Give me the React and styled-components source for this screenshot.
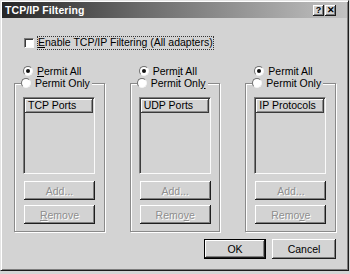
import React from "react";
import styled, { createGlobalStyle, css } from "styled-components";

const Global = createGlobalStyle`
  html, body { margin: 0; padding: 0; background: #d6d6d6; }
  body { font-family: "Liberation Sans", Arial, sans-serif; font-size: 10.5px; color: #000; }
  * { box-sizing: border-box; }
`;

const FACE = "#d3d3d3";

const Window = styled.div`
  width: 349px;
  height: 271px;
  background: ${FACE};
  border-top: 1px solid #e4e4e4;
  border-left: 1px solid #e4e4e4;
  border-right: 1px solid #1c1c1c;
  border-bottom: 1px solid #1c1c1c;
  box-shadow: inset 1px 1px #ffffff, inset -1px -1px #7c7c7c;
  padding: 1px;
  display: flex;
  flex-direction: column;
`;

const TitleBar = styled.div`
  height: 16px;
  background: linear-gradient(90deg, #262626 0%, #6a6a6a 40%, #c2c2c2 100%);
  display: flex;
  align-items: center;
  padding: 0 11px 0 3px;
`;

const Title = styled.div`
  flex: 1;
  color: #fff;
  font-weight: bold;
  font-size: 10.5px;
  letter-spacing: 0.1px;
`;

const CapBtn = styled.div`
  width: 11px;
  height: 11px;
  margin-left: ${(p) => p.$gap || 0}px;
  background: ${FACE};
  box-shadow: inset -1px -1px #1c1c1c, inset 1px 1px #fff, inset -2px -2px #7c7c7c;
  display: flex;
  align-items: center;
  justify-content: center;
  font-weight: bold;
  font-size: 9px;
  line-height: 1;
`;

const Content = styled.div`
  flex: 1;
  display: flex;
  flex-direction: column;
  padding: 0 11px 0 12px;
`;

const CheckRow = styled.div`
  margin-top: 18px;
  margin-left: 10px;
  height: 14px;
  display: flex;
  align-items: center;
`;

const CheckBox = styled.span`
  width: 10px;
  height: 10px;
  background: #fff;
  border: 1px solid;
  border-color: #7a7a7a #fafafa #fafafa #7a7a7a;
  box-shadow: inset 1px 1px #3a3a3a;
`;

const FocusLabel = styled.span`
  margin-left: 3px;
  padding: 0 1px 0 1px;
  height: 14px;
  line-height: 13px;
  outline: 1px dotted #333;
  outline-offset: -1px;
`;

const Columns = styled.div`
  display: flex;
  gap: 25px;
  margin-top: 15px;
`;

const Column = styled.div`
  width: 91px;
  display: flex;
  flex-direction: column;
`;

const RadioRow = styled.div`
  display: flex;
  align-items: center;
  height: 12px;
  margin-left: ${(p) => p.$indent || 0}px;
  white-space: nowrap;
`;

const Radio = styled.span`
  position: relative;
  flex: none;
  width: 10px;
  height: 10px;
  border-radius: 50%;
  background: #fff;
  border: 1px solid;
  border-color: #6e6e6e #f4f4f4 #f4f4f4 #6e6e6e;
  ${(p) =>
    p.$checked &&
    css`
      &::after {
        content: "";
        position: absolute;
        left: 2px;
        top: 2px;
        width: 4px;
        height: 4px;
        border-radius: 50%;
        background: #111;
      }
    `}
`;

const RadioText = styled.span`
  margin-left: 4px;
`;

const Group = styled.div`
  position: relative;
  margin-top: 6px;
  height: 149px;
  border: 1px solid #8a8a8a;
  box-shadow: inset 1px 1px #fff, 1px 1px #fff;
  padding: 13px 0 0 8px;
  display: flex;
  flex-direction: column;
`;

const Legend = styled.div`
  position: absolute;
  top: -7px;
  left: 6px;
  background: ${FACE};
  padding-right: 2px;
`;

const ListBox = styled.div`
  width: 72px;
  height: 77px;
  border: 1px solid;
  border-color: #7c7c7c #fafafa #fafafa #7c7c7c;
  box-shadow: inset 1px 1px #3a3a3a, inset -1px -1px ${FACE};
  padding: 1px;
  display: flex;
  flex-direction: column;
`;

const ListHeader = styled.div`
  height: 14px;
  box-shadow: inset -1px -1px #3a3a3a, inset 1px 1px #fff, inset -2px -2px #8a8a8a;
  padding-left: 3px;
  line-height: 13px;
  white-space: nowrap;
  overflow: hidden;
`;

const Button = styled.div`
  width: ${(p) => p.$w || 71}px;
  height: ${(p) => p.$h || 19}px;
  margin-top: ${(p) => p.$mt || 0}px;
  margin-left: ${(p) => p.$ml || 0}px;
  background: ${FACE};
  display: flex;
  align-items: center;
  justify-content: center;
  box-shadow: inset -1px -1px #1e1e1e, inset 1px 1px #fff, inset -2px -2px #808080;
  color: ${(p) => (p.$disabled ? "#8e8e8e" : "#000")};
  text-shadow: ${(p) => (p.$disabled ? "1px 1px #fff" : "none")};
  ${(p) =>
    p.$default &&
    css`
      border: 1px solid #000;
    `}
`;

const Footer = styled.div`
  display: flex;
  justify-content: flex-end;
  gap: 6px;
  margin-top: 7px;
`;

function FilterColumn({ title, allLabel, onlyLabel, removeLabel }) {
  return (
    <Column>
      <RadioRow $indent={9}>
        <Radio $checked />
        <RadioText>{allLabel}</RadioText>
      </RadioRow>
      <Group>
        <Legend>
          <RadioRow>
            <Radio />
            <RadioText>{onlyLabel}</RadioText>
          </RadioRow>
        </Legend>
        <ListBox>
          <ListHeader>{title}</ListHeader>
        </ListBox>
        <Button $disabled $mt={7} $ml={1}>
          Add...
        </Button>
        <Button $disabled $mt={5} $ml={1}>
          {removeLabel}
        </Button>
      </Group>
    </Column>
  );
}

export default function App() {
  return (
    <>
      <Global />
      <Window>
        <TitleBar>
          <Title>TCP/IP Filtering</Title>
          <CapBtn>?</CapBtn>
          <CapBtn $gap={1}>✕</CapBtn>
        </TitleBar>
        <Content>
          <CheckRow>
            <CheckBox />
            <FocusLabel>
              <u>E</u>nable TCP/IP Filtering (All adapters)
            </FocusLabel>
          </CheckRow>
          <Columns>
            <FilterColumn
              title="TCP Ports"
              allLabel={<><u>P</u>ermit All</>}
              onlyLabel={<>Permit Only</>}
              removeLabel={<><u>R</u>emove</>}
            />
            <FilterColumn
              title="UDP Ports"
              allLabel={<>Perm<u>i</u>t All</>}
              onlyLabel={<>Permit Onl<u>y</u></>}
              removeLabel={<>Remo<u>v</u>e</>}
            />
            <FilterColumn
              title="IP Protocols"
              allLabel={<>Permit All</>}
              onlyLabel={<>Permit Only</>}
              removeLabel={<>Remo<u>v</u>e</>}
            />
          </Columns>
          <Footer>
            <Button $w={62} $h={20} $default>
              OK
            </Button>
            <Button $w={64} $h={20}>
              Cancel
            </Button>
          </Footer>
        </Content>
      </Window>
    </>
  );
}
